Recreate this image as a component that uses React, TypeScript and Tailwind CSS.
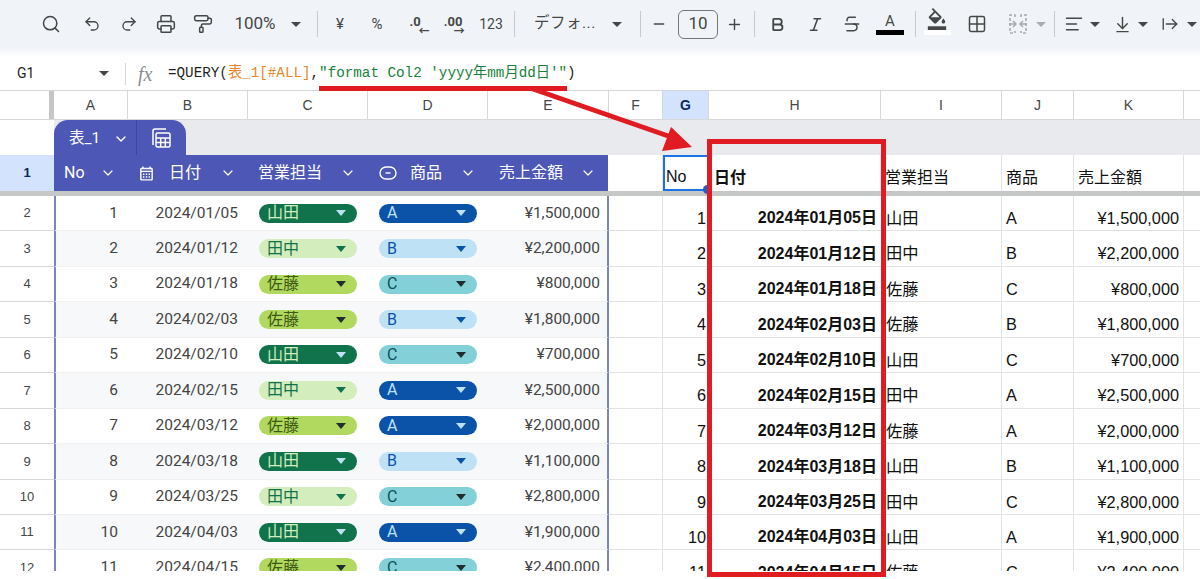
import React from "react";
import {
  ChevronDown,
  Minus,
  Plus,
  Search,
  Undo2,
  Redo2,
  Printer,
  PaintRoller,
  Bold,
  Italic,
  Strikethrough,
  Grid2x2,
  AlignLeft,
  ArrowDownToLine,
  ArrowRightFromLine,
} from "lucide-react";
import { MdOutlineFormatColorFill, MdOutlineCalendarMonth } from "react-icons/md";

const rows = [
  { no: 1, date: "01/05", jp: "01月05日", who: "山田", item: "A", price: "¥1,500,000" },
  { no: 2, date: "01/12", jp: "01月12日", who: "田中", item: "B", price: "¥2,200,000" },
  { no: 3, date: "01/18", jp: "01月18日", who: "佐藤", item: "C", price: "¥800,000" },
  { no: 4, date: "02/03", jp: "02月03日", who: "佐藤", item: "B", price: "¥1,800,000" },
  { no: 5, date: "02/10", jp: "02月10日", who: "山田", item: "C", price: "¥700,000" },
  { no: 6, date: "02/15", jp: "02月15日", who: "田中", item: "A", price: "¥2,500,000" },
  { no: 7, date: "03/12", jp: "03月12日", who: "佐藤", item: "A", price: "¥2,000,000" },
  { no: 8, date: "03/18", jp: "03月18日", who: "山田", item: "B", price: "¥1,100,000" },
  { no: 9, date: "03/25", jp: "03月25日", who: "田中", item: "C", price: "¥2,800,000" },
  { no: 10, date: "04/03", jp: "04月03日", who: "山田", item: "A", price: "¥1,900,000" },
  { no: 11, date: "04/15", jp: "04月15日", who: "佐藤", item: "C", price: "¥2,400,000" },
];

const pillColors: Record<string, string> = {
  山田: "bg-[#11734b] text-[#d4edbc]",
  田中: "bg-[#d4edbc] text-[#11734b]",
  佐藤: "bg-[#b1d95f] text-[#3d5a13]",
  A: "bg-[#0a53a8] text-[#bfe1f6]",
  B: "bg-[#bfe1f6] text-[#0a53a8]",
  C: "bg-[#83d0d8] text-[#0a4f5c]",
};

const roboto = "font-['Roboto','Noto_Sans_CJK_JP',sans-serif]";
const arial = "font-['Liberation_Sans','Noto_Sans_CJK_JP',sans-serif]";

function Divider() {
  return <div className="w-px h-[26px] bg-[#c7c9cc] shrink-0" />;
}

function Caret({ className = "border-t-[#444746]" }: { className?: string }) {
  return <span className={"shrink-0 w-0 h-0 border-x-[5px] border-x-transparent border-t-[5px] " + className} />;
}

function Tool({ w, children }: { w: string; children: React.ReactNode }) {
  return <div className={w + " shrink-0 flex items-center justify-center text-[#444746] whitespace-nowrap [&>*]:shrink-0"}>{children}</div>;
}

function Toolbar() {
  return (
    <div className="h-[57px] bg-gradient-to-b from-[#f0f4f9] from-[84%] to-white">
      <div className={"h-[48px] ml-[19px] rounded-l-[24px] flex items-center text-[#444746] " + roboto}>
        <Tool w="w-[32px] ml-[16px]"><Search size={20} strokeWidth={1.8} /></Tool>
        <Tool w="w-[34px] ml-[8px]"><Undo2 size={18} strokeWidth={1.8} /></Tool>
        <Tool w="w-[40px]"><Redo2 size={18} strokeWidth={1.8} /></Tool>
        <Tool w="w-[34px]"><Printer size={20} strokeWidth={1.8} /></Tool>
        <Tool w="w-[40px]"><PaintRoller size={20} strokeWidth={1.8} /></Tool>
        <Tool w="w-[64px] text-[17px]">100%</Tool>
        <Tool w="w-[18px]"><Caret /></Tool>
        <Tool w="w-[24px]"><Divider /></Tool>
        <Tool w="w-[22px] text-[15px]">¥</Tool>
        <Tool w="w-[52px] text-[15px]">%</Tool>
        <Tool w="w-[24px]">
          <span className="relative text-[13px] font-bold leading-none -mt-[5px]">.0
            <span className="absolute left-[9px] top-[11px] text-[11px] leading-none">←</span>
          </span>
        </Tool>
        <Tool w="w-[52px]">
          <span className="relative text-[13px] font-bold leading-none -mt-[5px]">.00
            <span className="absolute left-[10px] top-[11px] text-[11px] leading-none">→</span>
          </span>
        </Tool>
        <Tool w="w-[24px] text-[14px]">123</Tool>
        <Tool w="w-[22px]"><Divider /></Tool>
        <div className={"w-[84px] pl-[9px] shrink-0 text-[15.5px] tracking-[0.5px] whitespace-nowrap " + roboto}>デフォ...</div>
        <Tool w="w-[16px]"><Caret /></Tool>
        <Tool w="w-[24px] ml-[3px]"><Divider /></Tool>
        <Tool w="w-[14px]"><Minus size={16} /></Tool>
        <Tool w="w-[40px] ml-[12px] h-[29px] border border-[#747775] rounded-[6px] text-[17px]">10</Tool>
        <Tool w="w-[20px] ml-[6px]"><Plus size={17} /></Tool>
        <Tool w="w-[20px]"><Divider /></Tool>
        <Tool w="w-[26px]"><Bold size={17} strokeWidth={2.6} /></Tool>
        <Tool w="w-[50px]"><Italic size={17} strokeWidth={2.2} /></Tool>
        <Tool w="w-[24px]"><Strikethrough size={20} strokeWidth={1.8} /></Tool>
        <Tool w="w-[48px] ml-[2px]">
          <div className="flex flex-col items-center">
            <span className="text-[15px] leading-[17px]">A</span>
            <span className="w-[28px] h-[5px] bg-black" />
          </div>
        </Tool>
        <Tool w="w-[2px]"><Divider /></Tool>
        <Tool w="w-[42px]">
          <div className="flex flex-col items-center -mt-[5px]">
            <MdOutlineFormatColorFill size={22} />
            <span className="w-[27px] h-[5px] bg-white" />
          </div>
        </Tool>
        <Tool w="w-[38px]"><Grid2x2 size={20} strokeWidth={1.8} /></Tool>
        <Tool w="w-[28px] ml-[8px]">
          <svg width="20" height="22" viewBox="0 0 20 22" fill="none" stroke="#a9abad" strokeWidth="1.6">
            <path d="M7 4V2H2v18h5v-2M13 4V2h5v18h-5v-2" strokeDasharray="3 2" />
            <path d="M1 11h6M5 8l3 3-3 3M19 11h-6M15 8l-3 3 3 3" />
          </svg>
        </Tool>
        <Tool w="w-[18px]"><Caret className="border-t-[#a9abad]" /></Tool>
        <Tool w="w-[8px]"><Divider /></Tool>
        <Tool w="w-[32px]"><AlignLeft size={20} strokeWidth={1.8} /></Tool>
        <Tool w="w-[10px]"><Caret /></Tool>
        <Tool w="w-[28px] ml-[8px]"><ArrowDownToLine size={19} strokeWidth={1.8} /></Tool>
        <Tool w="w-[14px]"><Caret /></Tool>
        <Tool w="w-[40px]"><ArrowRightFromLine size={18} strokeWidth={1.8} /></Tool>
        <Tool w="w-[4px]"><Caret /></Tool>
      </div>
    </div>
  );
}

function FormulaBar() {
  return (
    <div className="h-[34px] flex items-center border-b border-[#d4d6d8] relative">
      <div className={"w-[99px] pl-[17px] text-[14px] text-[#1f1f1f] " + roboto}>G1</div>
      <Caret className="mr-[16px] border-t-[#444746]" />
      <div className="w-px h-[22px] bg-[#d4d6d8]" />
      <span className="ml-[12px] w-[30px] text-[#8c8f93] text-[20px] italic font-['Liberation_Serif',serif]">fx</span>
      <div className="text-[14.25px] whitespace-nowrap text-[#1f1f1f] font-['Liberation_Mono','Noto_Sans_CJK_JP',monospace]">
        =QUERY(<span className="text-[#e8872b]">表_1[#ALL]</span>,<span className="text-[#188038]">"format Col2 'yyyy年mm月dd日'"</span>)
      </div>
    </div>
  );
}

function ColHeader() {
  const cols = [
    ["A", "w-[74px]"], ["B", "w-[120px]"], ["C", "w-[120px]"], ["D", "w-[120px]"], ["E", "w-[121px]"], ["F", "w-[54px]"],
  ];
  const cols2 = [["H", "w-[172px]"], ["I", "w-[121px]"], ["J", "w-[72px]"], ["K", "w-[110px]"]];
  const cell = "h-full flex items-center justify-center border-r border-[#d6d8da] shrink-0";
  return (
    <div className={"h-[29px] flex text-[14px] text-[#444746] border-b border-[#d6d8da] " + arial}>
      <div className="w-[49px] shrink-0" />
      <div className="w-[5px] bg-[#c4c7c5] shrink-0" />
      {cols.map(([n, w]) => <div key={n} className={cell + " " + w}>{n}</div>)}
      <div className={"w-[46px] bg-[#d3e3fd] font-bold text-[#0b2a5c] " + cell}>G</div>
      {cols2.map(([n, w]) => <div key={n} className={cell + " " + w}>{n}</div>)}
    </div>
  );
}

function TabBand() {
  return (
    <div className="h-[35px] flex">
      <div className="w-[54px] shrink-0 bg-white" />
      <div className="flex-1 bg-[#e8eaed]">
        <div className={"w-[132px] h-full rounded-t-[14px] bg-[#4d57b5] flex items-center text-white text-[15.5px] " + roboto}>
          <div className="w-[83px] h-full flex items-center pl-[15px] pt-[2px] border-r border-[#3f4799]">
            表_1
            <ChevronDown size={16} className="ml-[13px]" />
          </div>
          <svg className="ml-[13px]" width="22" height="22" viewBox="0 0 22 22" fill="none" stroke="white" strokeWidth="1.5">
            <path d="M16 2H5a2 2 0 0 0-2 2v14" />
            <rect x="6" y="6" width="14" height="14" rx="1.5" />
            <path d="M6 11h14M6 15.5h14M10.7 11v9M15.3 11v9" />
          </svg>
        </div>
      </div>
    </div>
  );
}

function HeadCell({ w, icon, label, pl = "pl-[10px]" }: { w: string; icon?: React.ReactNode; label: string; pl?: string }) {
  return (
    <div className={w + " " + pl + " shrink-0 flex items-center pr-[12px]"}>
      {icon}
      <span>{label}</span>
      <ChevronDown size={16} strokeWidth={1.8} className="ml-auto" />
    </div>
  );
}

function GridText({ w, className = "", children }: { w: string; className?: string; children?: React.ReactNode }) {
  return <div className={w + " shrink-0 h-full border-r border-[#e2e3e3] whitespace-nowrap overflow-hidden " + className}>{children}</div>;
}

function HeaderRow() {
  return (
    <div className="h-[36px] flex">
      <div className={"w-[54px] shrink-0 bg-[#d3e3fd] flex items-center justify-center font-bold text-[13px] text-[#0b2a5c] " + arial}>1</div>
      <div className={"w-[554px] shrink-0 flex bg-[#4d57b5] text-white text-[16px] " + roboto}>
        <HeadCell w="w-[74px]" label="No" />
        <HeadCell
          w="w-[120px]"
          pl="pl-[9px]"
          label="日付"
          icon={<MdOutlineCalendarMonth size={17} className="mr-[14px] ml-[1px]" />}
        />
        <HeadCell w="w-[120px]" pl="pl-[10px]" label="営業担当" />
        <HeadCell
          w="w-[120px]"
          pl="pl-[10px]"
          label="商品"
          icon={
            <svg className="mr-[13px] ml-[1px]" width="18" height="14" viewBox="0 0 18 14" fill="none" stroke="white" strokeWidth="1.4">
              <rect x="1" y="1" width="16" height="12" rx="6" />
              <path d="M6.5 7h5" />
            </svg>
          }
        />
        <HeadCell w="w-[120px]" pl="pl-[11px]" label="売上金額" />
      </div>
      <div className={"flex-1 flex text-[16px] text-[#111] " + arial}>
        <GridText w="w-[55px]" />
        <div className="w-[46px] shrink-0 h-full border-2 border-[#1a73e8] flex items-end pl-[1px] relative">
          No
          <span className="absolute -right-[5px] -bottom-[5px] w-[9px] h-[9px] rounded-full bg-[#1a5fc8]" />
        </div>
        <GridText w="w-[172px]" className="flex items-end pl-[5px] font-bold pb-[1px]">日付</GridText>
        <GridText w="w-[121px]" className="flex items-end pl-[4px] pb-[1px]">営業担当</GridText>
        <GridText w="w-[72px]" className="flex items-end pl-[4px] pb-[1px]">商品</GridText>
        <GridText w="w-[110px]" className="flex items-end pl-[4px] pb-[1px]">売上金額</GridText>
      </div>
    </div>
  );
}

function Pill({ value, w }: { value: string; w: string }) {
  const light = value === "山田" || value === "A";
  return (
    <div className={w + " shrink-0 flex items-center"}>
      <div className={"w-[98px] h-[19px] rounded-full flex items-center justify-between pl-[8px] pr-[11px] text-[16px] " + pillColors[value]}>
        <span>{value}</span>
        <span className={"w-0 h-0 border-x-[5px] border-x-transparent border-t-[6px] " + (light ? "border-t-[#bfe1f6]" : value === "B" ? "border-t-[#0a53a8]" : value === "田中" ? "border-t-[#11734b]" : "border-t-[#1f2d2e]")} />
      </div>
    </div>
  );
}

function DataRow({ r, i }: { r: (typeof rows)[number]; i: number }) {
  const shaded = i % 2 === 1;
  const grid = "h-full shrink-0 border-r border-b border-[#e2e3e3] flex items-end ";
  return (
    <div className="h-[35.44px] flex">
      <div className={"w-[54px] shrink-0 flex items-center justify-center text-[13px] text-[#444746] border-b border-[#d6d8da] " + arial}>{i + 2}</div>
      <div className={"w-[555px] shrink-0 flex items-center text-[15.5px] text-[#444] border-x-2 border-[#7b83c4] border-b border-b-[#f1f1f2] " + roboto + (shaded ? " bg-[#f6f8f9]" : " bg-white")}>
        <div className="w-[72px] shrink-0 text-right pr-[10px]">{r.no}</div>
        <div className="w-[120px] shrink-0 text-right pr-[10px]">2024/{r.date}</div>
        <div className="w-[11px] shrink-0" />
        <Pill value={r.who} w="w-[120px]" />
        <Pill value={r.item} w="w-[109px]" />
        <div className="w-[121px] shrink-0 text-right pr-[9px]">{r.price}</div>
      </div>
      <div className={"flex-1 flex h-full text-[16.3px] text-[#111] " + arial}>
        <div className={grid + "w-[54px]"} />
        <div className={grid + "w-[47px] justify-end pr-[3px]"}>{r.no}</div>
        <div className={grid + "w-[172px] justify-end pr-[4px] font-bold text-[16px]"}>2024年{r.jp}</div>
        <div className={grid + "w-[120px] pl-[4px]"}>{r.who}</div>
        <div className={grid + "w-[72px] pl-[4px]"}>{r.item}</div>
        <div className={grid + "w-[110px] justify-end pr-[4px]"}>{r.price}</div>
        <div className="flex-1 h-full border-b border-[#e2e3e3]" />
      </div>
    </div>
  );
}

export default function App() {
  return (
    <div className="relative w-[1200px] h-[579px] overflow-hidden bg-white">
      <Toolbar />
      <FormulaBar />
      <ColHeader />
      <TabBand />
      <HeaderRow />
      <div className="h-[5px] bg-[#c4c7c5]" />
      <div className="h-[375px] overflow-hidden">
        {rows.map((r, i) => <DataRow key={r.no} r={r} i={i} />)}
      </div>
      {/* red annotation on top of the sheet */}
      <svg className="absolute left-0 top-0 pointer-events-none" width="1200" height="579" fill="none">
        <rect x="319" y="86" width="248" height="5" fill="#e01b22" />
        <path d="M533 89L674 138" stroke="#e01b22" strokeWidth="5" />
        <polygon points="671,127 692,147 662,151" fill="#e01b22" />
        <rect x="709.5" y="141.5" width="174" height="433" stroke="#e01b22" strokeWidth="5" />
      </svg>
    </div>
  );
}
